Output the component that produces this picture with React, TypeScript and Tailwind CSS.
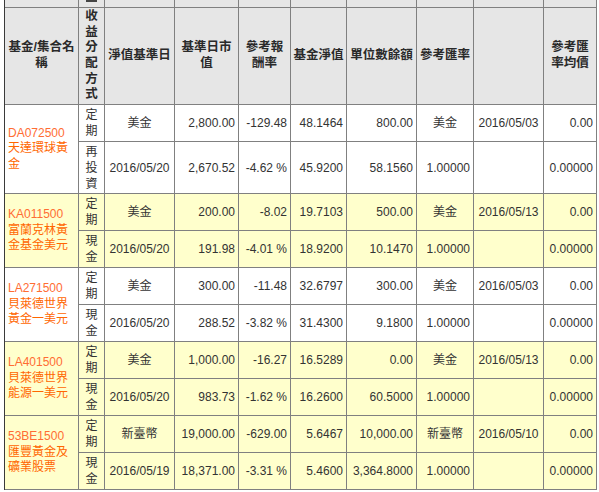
import React from 'react';

// ─── Data ─────────────────────────────────────────────────────────────────────

type Fund = {
  code: string;
  name: string[];
  yellow: boolean;
  rows: string[][];
};

const funds: Fund[] = [
  {
    code: 'DA072500',
    name: ['天達環球黃', '金'],
    yellow: false,
    rows: [
      ['定期', '美金', '2,800.00', '-129.48', '48.1464', '800.00', '美金', '2016/05/03', '0.00'],
      ['再投資', '2016/05/20', '2,670.52', '-4.62 %', '45.9200', '58.1560', '1.00000', '', '0.00000'],
    ],
  },
  {
    code: 'KA011500',
    name: ['富蘭克林黃', '金基金美元'],
    yellow: true,
    rows: [
      ['定期', '美金', '200.00', '-8.02', '19.7103', '500.00', '美金', '2016/05/13', '0.00'],
      ['現金', '2016/05/20', '191.98', '-4.01 %', '18.9200', '10.1470', '1.00000', '', '0.00000'],
    ],
  },
  {
    code: 'LA271500',
    name: ['貝萊德世界', '黃金一美元'],
    yellow: false,
    rows: [
      ['定期', '美金', '300.00', '-11.48', '32.6797', '300.00', '美金', '2016/05/03', '0.00'],
      ['現金', '2016/05/20', '288.52', '-3.82 %', '31.4300', '9.1800', '1.00000', '', '0.00000'],
    ],
  },
  {
    code: 'LA401500',
    name: ['貝萊德世界', '能源一美元'],
    yellow: true,
    rows: [
      ['定期', '美金', '1,000.00', '-16.27', '16.5289', '0.00', '美金', '2016/05/13', '0.00'],
      ['現金', '2016/05/20', '983.73', '-1.62 %', '16.2600', '60.5000', '1.00000', '', '0.00000'],
    ],
  },
  {
    code: '53BE1500',
    name: ['匯豐黃金及', '礦業股票'],
    yellow: true,
    rows: [
      ['定期', '新臺幣', '19,000.00', '-629.00', '5.6467', '10,000.00', '新臺幣', '2016/05/10', '0.00'],
      ['現金', '2016/05/19', '18,371.00', '-3.31 %', '5.4600', '3,364.8000', '1.00000', '', '0.00000'],
    ],
  },
];

const headers: string[][] = [
  ['基金/集合名', '稱'],
  ['收', '益', '分', '配', '方', '式'],
  ['淨值基準日'],
  ['基準日市', '值'],
  ['參考報', '酬率'],
  ['基金淨值'],
  ['單位數餘額'],
  ['參考匯率'],
  [],
  ['參考匯', '率均價'],
];

const isCjk = (s: string) => /[\u4e00-\u9fff]/.test(s);

// alignment for data columns 2..10 (index 0 = 收益分配方式)
function alignFor(col: number, value: string) {
  if (col === 0 || col === 1 || col === 7) return 'justify-center';
  if (col === 6) return isCjk(value) ? 'justify-center' : 'justify-end pr-[3px]';
  return 'justify-end pr-[3px]';
}

// ─── Page ─────────────────────────────────────────────────────────────────────

export default function App() {
  return (
    <div className="min-h-screen bg-white font-['Liberation_Sans','Noto_Sans_CJK_TC',sans-serif] text-[12px] text-[#333]">
      <div className="ml-[4px] w-[593px] grid grid-cols-[73px_25px_69px_63px_51px_55px_69px_56px_69px_52px] grid-rows-[7px_96px_36px_51px_36px_36px_36px_36px_36px_36px_36px_36px] gap-px bg-[#808080] border-l border-[#3a3a3a] pr-px pb-px">
        {/* cut-off row above the header */}
        {headers.map((_, i) => (
          <div key={`top-${i}`} className="bg-[#e6e6e6] flex justify-center items-start">
            {i === 1 && <div className="w-[11px] h-[2px] bg-[#444]" />}
          </div>
        ))}

        {/* Header */}
        {headers.map((lines, i) => (
          <div
            key={`h-${i}`}
            className="bg-[#e6e6e6] flex flex-col items-center justify-center text-center font-bold text-[12.5px] leading-[15.6px] text-[#2a2a2a]"
          >
            {lines.map((l, j) => (
              <span key={j} className="whitespace-nowrap">
                {l}
              </span>
            ))}
          </div>
        ))}

        {/* Body */}
        {funds.map((f) => {
          const bg = f.yellow ? 'bg-[#ffffcc]' : 'bg-white';
          return f.rows.map((row, r) => (
            <React.Fragment key={`${f.code}-${r}`}>
              {r === 0 && (
                <div className={`${bg} row-span-2 flex flex-col justify-center pl-[3px] leading-[15.5px] text-[#ff6600]`}>
                  <span className="text-[#ff6d33]">{f.code}</span>
                  {f.name.map((n) => (
                    <span key={n} className="whitespace-nowrap">
                      {n}
                    </span>
                  ))}
                </div>
              )}
              {row.map((cell, c) =>
                c === 0 ? (
                  <div key={c} className={`${bg} flex flex-col items-center justify-center leading-[16px]`}>
                    {cell.split('').map((ch, k) => (
                      <span key={k}>{ch}</span>
                    ))}
                  </div>
                ) : (
                  <div key={c} className={`${bg} flex items-center whitespace-nowrap ${alignFor(c, cell)}`}>
                    {cell}
                  </div>
                )
              )}
            </React.Fragment>
          ));
        })}
      </div>
    </div>
  );
}
